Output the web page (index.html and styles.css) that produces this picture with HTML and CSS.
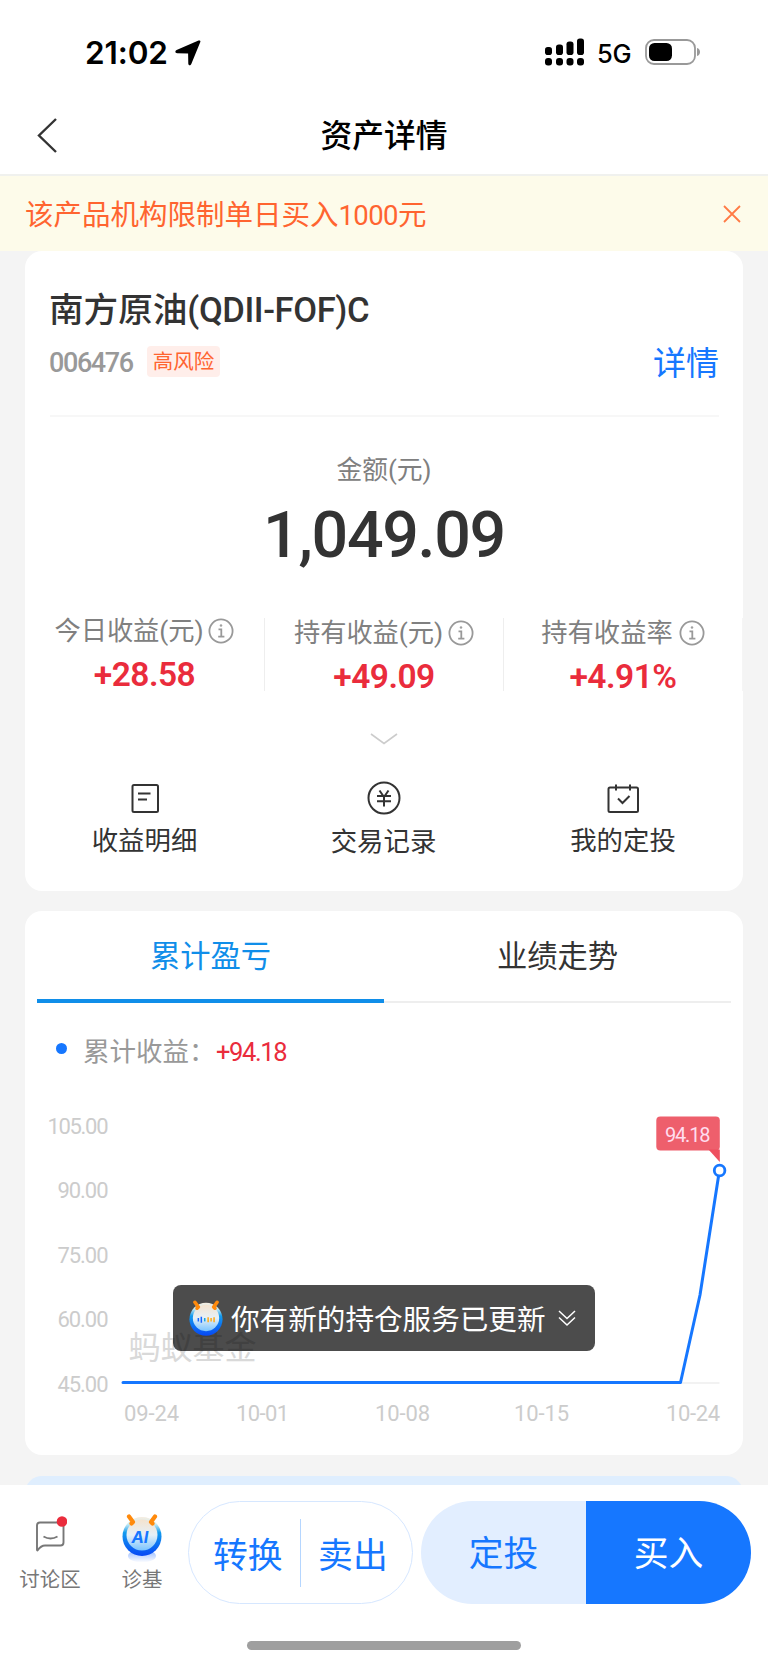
FILE: index.html
```html
<!DOCTYPE html>
<html lang="zh-CN">
<head>
<meta charset="utf-8">
<title>资产详情</title>
<link rel="stylesheet" href="styles.css">
</head>
<body>
<div class="screen">
  <div class="status">
    <span class="time">21:02</span>
    <svg class="loc" width="26" height="26" viewBox="0 0 26 26"><path d="M23.500.600c1.500-.6 2.300.3 1.700 1.700L16.300 23.900c-.8 1.900-3 1.700-3-.5L13.100 13.400 2.200 13.200C0 13.100-.3 11 1.600 10.100z"/></svg>
    <svg class="signal" width="40" height="28" viewBox="0 0 40 28"><g><rect x="0" y="9" width="7" height="8" rx="2.800"/><rect x="11" y="6.500" width="7" height="10.500" rx="2.800"/><rect x="21.500" y="3.500" width="7" height="13.500" rx="2.800"/><rect x="32" y="0.500" width="7" height="16.500" rx="2.800"/><rect x="0" y="20" width="7" height="7.500" rx="3"/><rect x="11" y="20" width="7" height="7.500" rx="3"/><rect x="21.500" y="20" width="7" height="7.500" rx="3"/><rect x="32" y="20" width="7" height="7.500" rx="3"/></g></svg>
    <span class="net">5G</span>
    <svg class="battery" width="56" height="26" viewBox="0 0 56 26"><rect x="1" y="1" width="49" height="24" rx="8" fill="none" stroke="#999" stroke-width="1.800"/><rect x="4" y="4" width="23" height="18" rx="5.500"/><path d="M52 9c4 1 4 7 0 8z" fill="#999"/></svg>
  </div>
  <header class="nav">
    <svg class="back" width="21" height="35" viewBox="0 0 21 35"><path d="M19 1 2 17.500 19 34" fill="none" stroke="#333" stroke-width="2.400"/></svg>
    <h1>资产详情</h1>
  </header>
  <div class="notice">
    <span>该产品机构限制单日买入<b>1000</b>元</span>
    <svg width="18" height="18" viewBox="0 0 18 18"><path d="M1 1 17 17M17 1 1 17" stroke="#ff7a45" stroke-width="1.800"/></svg>
  </div>

  <section class="card summary">
    <h2>南方原油<span>(QDII-FOF)C</span></h2>
    <div class="meta"><span class="code">006476</span><span class="risk">高风险</span><a class="detail">详情</a></div>
    <div class="amount-label">金额(元)</div>
    <div class="amount">1,049.09</div>
    <div class="stats">
      <div class="stat"><div class="label">今日收益(元)<svg class="info" viewBox="0 0 26 26"><circle cx="13" cy="13" r="11.600"/><path d="M10.500 11.300h2.800v7.200M10.200 18.700h6.200"/><circle cx="13" cy="7.500" r="1" class="dot"/></svg></div><div class="value">+28.58</div></div>
      <div class="stat low"><div class="label">持有收益(元)<svg class="info" viewBox="0 0 26 26"><circle cx="13" cy="13" r="11.600"/><path d="M10.500 11.300h2.800v7.200M10.200 18.700h6.200"/><circle cx="13" cy="7.500" r="1" class="dot"/></svg></div><div class="value">+49.09</div></div>
      <div class="stat low"><div class="label rate">持有收益率<svg class="info" viewBox="0 0 26 26"><circle cx="13" cy="13" r="11.600"/><path d="M10.500 11.300h2.800v7.200M10.200 18.700h6.200"/><circle cx="13" cy="7.500" r="1" class="dot"/></svg></div><div class="value">+4.91%</div></div>
    </div>
    <svg class="expand" width="28" height="12" viewBox="0 0 28 12"><path d="M1 1 14 10.500 27 1" fill="none" stroke="#ccc" stroke-width="1.600"/></svg>
    <div class="actions">
      <div class="action"><svg width="36" height="36" viewBox="0 0 36 36"><rect x="5.500" y="5" width="25.500" height="27" rx="1.500"/><path d="M11 13.500H23.500M11 19.500H20"/></svg><span>收益明细</span></div>
      <div class="action low"><svg width="36" height="36" viewBox="0 0 36 36"><circle cx="18" cy="18" r="15.500"/><path d="M13.500 10.500 18 17l4.500-6.500M18 16v10.500M11 16h14M11 21.300h14"/></svg><span>交易记录</span></div>
      <div class="action"><svg width="36" height="36" viewBox="0 0 36 36"><rect x="3.500" y="7.500" width="29.500" height="24.500" rx="1.500"/><path d="M11 4.500v6M25 4.500v6M13 18.500l4.500 4.500L24.500 16"/></svg><span>我的定投</span></div>
    </div>
  </section>

  <section class="card trend">
    <div class="tabs"><div class="tab active">累计盈亏</div><div class="tab">业绩走势</div></div>
    <div class="legend"><i></i><span>累计收益：</span><em>+94.18</em></div>
    <svg class="chart" width="718" height="355" viewBox="25 1100 718 355">
      <g class="ylab">
        <text x="108.500" y="1133.500" textLength="61">105.00</text>
        <text x="108.500" y="1198" textLength="51">90.00</text>
        <text x="108.500" y="1262.500" textLength="51">75.00</text>
        <text x="108.500" y="1327" textLength="51">60.00</text>
        <text x="108.500" y="1391.500" textLength="51">45.00</text>
      </g>
      <g class="xlab">
        <text x="124" y="1420.500" textLength="55">09-24</text>
        <text x="236" y="1420.500" textLength="53">10-01</text>
        <text x="375" y="1420.500" textLength="55">10-08</text>
        <text x="514" y="1420.500" textLength="55">10-15</text>
        <text x="666" y="1420.500" textLength="54">10-24</text>
      </g>
      <text class="mark" x="128.500" y="1359">蚂蚁基金</text>
      <path d="M122 1383H719.500" stroke="#eee" stroke-width="1.500"/>
      <path d="M123 1382.500H680.500L700 1295 719.500 1170" fill="none" stroke="#1677ff" stroke-width="3" stroke-linecap="round" stroke-linejoin="round"/>
      <circle cx="719.600" cy="1170.500" r="5.300" fill="#fff" stroke="#1677ff" stroke-width="2.800"/>
      <rect x="656.300" y="1116.500" width="63.500" height="34" rx="4" fill="#ee5f6c"/>
      <path d="M708.500 1149.500H719.800V1162z" fill="#ee4f5e"/>
      <text class="tip" x="665" y="1141.500" textLength="45.500">94.18</text>
    </svg>
    <div class="toast">
      <svg width="34" height="36" viewBox="0 0 40 42"><use href="#ant"/><g stroke-width="1.800"><path d="M11 21v4M14.500 19.500v7" stroke="#1766ff"/><path d="M18.500 21v4" stroke="#19a6d6"/><path d="M22.500 20v6M26 21v4M29.500 20v6" stroke="#ffab1a"/></g></svg>
      <span>你有新的持仓服务已更新</span>
      <svg class="more" width="18" height="18" viewBox="0 0 18 18"><path d="M1 2 9 9.500 17 2M1 8.500 9 16 17 8.500" fill="none" stroke="#fff" stroke-width="1.500"/></svg>
    </div>
  </section>
  <div class="peek"></div>

  <footer class="bar">
    <div class="tool chat">
      <svg width="36" height="40" viewBox="0 0 36 40"><path d="M6 36V11.500Q6 8.500 9 8.500H29.500Q32.500 8.500 32.500 11.500V28.500Q32.500 31.500 29.500 31.500H14Q10 31.500 6.500 36.500Z" fill="none" stroke="#777" stroke-width="1.900" stroke-linejoin="round"/><path d="M12.500 22.500Q19.500 26.500 26.500 22.500" fill="none" stroke="#777" stroke-width="1.900"/><circle cx="31" cy="7.500" r="5.300" fill="#ea2c3c"/></svg>
      <span>讨论区</span>
    </div>
    <div class="tool ai">
      <svg width="42" height="52" viewBox="0 0 42 52">
        <defs>
          <linearGradient id="ring" x1="0" y1="0" x2="0" y2="1"><stop offset="0" stop-color="#f6ecdf"/><stop offset=".18" stop-color="#cdeef5"/><stop offset=".4" stop-color="#129bee"/><stop offset="1" stop-color="#0747f5"/></linearGradient>
          <linearGradient id="face" x1="0" y1="0" x2="0" y2="1"><stop offset="0" stop-color="#f4e3cf"/><stop offset=".5" stop-color="#e6f0f7"/><stop offset="1" stop-color="#79c4ff"/></linearGradient>
          <linearGradient id="glow" x1="0" y1="0" x2="0" y2="1"><stop offset="0" stop-color="#8fb4ff"/><stop offset="1" stop-color="#8fb4ff" stop-opacity="0"/></linearGradient>
          <g id="ant"><circle cx="20" cy="22.500" r="19.500" fill="url(#ring)"/><circle cx="20" cy="21" r="15.500" fill="url(#face)"/><path d="M7 2.500 11 8 9.500 9.500M33 2.500 29 8 30.500 9.500" fill="none" stroke="#ff8a0c" stroke-width="4.200" stroke-linecap="round" stroke-linejoin="round"/></g>
        </defs>
        <ellipse cx="21" cy="42" rx="14" ry="6.500" fill="url(#glow)"/>
        <use href="#ant" x="1"/>
        <text x="10.500" y="29" class="ai-text">AI</text>
      </svg>
      <span>诊基</span>
    </div>
    <div class="pill outline"><span>转换</span><i></i><span>卖出</span></div>
    <div class="pill solid"><span class="plan">定投</span><span class="buy">买入</span></div>
  </footer>
  <div class="home"></div>
</div>
</body>
</html>
```
FILE: styles.css
```css
* { box-sizing: border-box; }
body { margin: 0; }
h1, h2 { margin: 0; }
i, em { font-style: normal; }
.screen {
  width: 768px; height: 1665px; overflow: hidden;
  background: #f4f4f4; color: #333;
  font-family: Roboto, "Noto Sans CJK SC", sans-serif;
  display: flex; flex-direction: column;
}
.status { height: 90px; flex: none; background: #fff; display: flex; align-items: flex-start; padding: 39px 0 0 85px; color: #000; }
.time { flex: none; font: 600 31.500px/27px Inter, sans-serif; letter-spacing: -.1px; width: 90px; white-space: nowrap; }
.status svg { flex: none; }
.loc { margin-top: 1px; }
.signal { margin: -1px 0 0 344px; }
.net { flex: none; font: 500 25.500px/29px Inter, sans-serif; width: 60px; padding-left: 12px; white-space: nowrap; letter-spacing: -.3px; }
.nav { height: 86px; flex: none; background: #fff; border-bottom: 2px solid #f0f1ee; display: grid; grid-template-columns: 100px 1fr 100px; align-items: center; }
.back { margin: 6px 0 0 37px; }
.nav h1 { font-weight: 500; font-size: 31.800px; line-height: 40px; text-align: center; color: #000; padding-top: 8px; }
.notice { height: 75px; flex: none; background: #fdfbea; color: #ff6430; display: flex; align-items: center; justify-content: space-between; padding: 0 27px 0 25px; font-size: 28.500px; }
.notice span { padding-bottom: 3px; }
.notice b { font-weight: 400; font-size: 27.500px; letter-spacing: -.6px; }
.card { width: 718px; margin: 0 25px; flex: none; background: #fff; border-radius: 17px; position: relative; }
.summary { height: 640px; display: flex; flex-direction: column; }
.summary h2 { font-size: 34.600px; font-weight: 500; line-height: 44px; padding: 37px 0 0 24px; white-space: nowrap; }
.summary h2 span { letter-spacing: -.4px; }
.meta { height: 85px; margin: 0 24px 0 25px; border-bottom: 2px solid #f7f7f7; display: flex; align-items: flex-start; }
.code { font-size: 27px; font-weight: 500; color: #999; line-height: 32px; margin: 15px 0 0 -1px; width: 98px; letter-spacing: -1.400px; }
.risk { width: 73px; height: 31px; margin-top: 14px; border-radius: 4px; background: #ffeeea; color: #ff6430; font-size: 20.500px; line-height: 33px; text-align: center; }
.detail { margin-left: auto; font-size: 33px; line-height: 40px; color: #1677ff; margin-top: 12px; }
.amount-label { margin-top: 36px; font-size: 25.800px; line-height: 34px; color: #808080; text-align: center; }
.amount { font-size: 64.500px; font-weight: 500; line-height: 70px; margin-top: 13px; text-align: center; letter-spacing: -1.300px; }
.stats { display: grid; grid-template-columns: 240px 239px 239px; margin-top: 48px; }
.stat { height: 73px; border-right: 1px solid #eee; }
.stat:last-child { border-color: #f5f5f5; }
.label { display: flex; justify-content: center; align-items: center; gap: 5px; height: 26px; font-size: 26.300px; line-height: 28px; color: #808080; white-space: nowrap; letter-spacing: -.1px; }
.label.rate { gap: 6px; letter-spacing: 0; }
.info { width: 26px; height: 26px; fill: none; stroke: #999; stroke-width: 1.800; }
.info .dot { fill: #999; stroke-width: .5; }
.value { color: #ea2c3c; font-size: 33.500px; font-weight: 600; line-height: 34px; margin-top: 14px; text-align: center; letter-spacing: -.5px; }
.stat.low .label { position: relative; top: 1.500px; }
.stat.low .value { position: relative; top: 2px; }
.expand { align-self: center; margin-top: 42px; }
.actions { display: grid; grid-template-columns: 239px 239px 240px; margin-top: 35px; }
.action { display: flex; flex-direction: column; align-items: center; font-size: 26.400px; line-height: 34px; }
.action svg { fill: none; stroke: #333; stroke-width: 2; }
.action span { margin-top: 8px; }
.action.low span { margin-top: 9px; }
.trend { height: 544px; margin-top: 20px; }
.tabs { display: grid; grid-template-columns: 1fr 1fr; margin: 0 12px; height: 92px; }
.tab { font-size: 30.300px; line-height: 91px; height: 92px; text-align: center; border-bottom: 2px solid #eee; }
.tab.active { color: #108ee9; border-bottom: 4px solid #108ee9; }
.legend { height: 97px; display: flex; align-items: flex-start; padding: 28px 0 0 31px; font-size: 26.500px; line-height: 42px; color: #999; }
.legend i { width: 11px; height: 11px; margin: 12px 16px 0 0; border-radius: 50%; background: #1677ff; }
.legend span { width: 133px; white-space: nowrap; }
.legend em { font-size: 25.500px; color: #ea2c3c; letter-spacing: -1.400px; }
.chart { display: block; }
.ylab, .xlab { font-size: 22px; fill: #ccc; }
.ylab { text-anchor: end; }
.mark { font-size: 32px; fill: #d9d9d9; }
.tip { font-size: 20px; fill: #fde; }
.toast { position: absolute; left: 148px; top: 374px; width: 422px; height: 66px; border-radius: 8px; background: rgba(0,0,0,.7); color: #fff; display: flex; align-items: center; padding-left: 16px; font-size: 28.600px; }
.toast span { margin-left: 8px; width: 327px; white-space: nowrap; padding-bottom: 2px; }
.toast .more { margin-bottom: 1px; }
.peek { height: 9px; flex: none; margin: 21px 25px 0; background: #dfeefe; clip-path: inset(0 0 -20px 0 round 17px 17px 0 0); }
.bar { height: 136px; flex: none; background: #fff; display: flex; align-items: flex-start; }
.tool { display: flex; flex-direction: column; align-items: center; font-size: 20.500px; color: #777; line-height: 26px; }
.chat { width: 100px; padding-top: 29px; }
.chat svg { margin-left: -2px; }
.chat span { margin-top: 13px; }
.ai { width: 88px; padding: 29px 4px 0 0; }
.ai span { margin-top: 1px; }
.ai-text { font: italic 700 16.500px Inter, sans-serif; fill: #1677ff; }
.pill { height: 103px; margin-top: 16px; border-radius: 52px; display: flex; align-items: center; font-size: 34.800px; color: #1677ff; overflow: hidden; }
.outline { width: 225px; border: 1px solid #d6e7ff; padding: 0 0 0 24px; }
.outline i { width: 1.500px; height: 68px; background: #b5d6ff; margin: 0 17px; }
.solid { margin-left: 8px; width: 330px; }
.solid span { width: 165px; height: 103px; line-height: 107px; text-align: center; }
.plan { background: #e2eeff; }
.buy { background: #1677ff; color: #fff; }
.home { flex: 1; background: #fff; padding: 20px 0 0 247px; }
.home::before { content: ""; display: block; width: 274px; height: 9px; border-radius: 5px; background: #9f9f9f; }
```
